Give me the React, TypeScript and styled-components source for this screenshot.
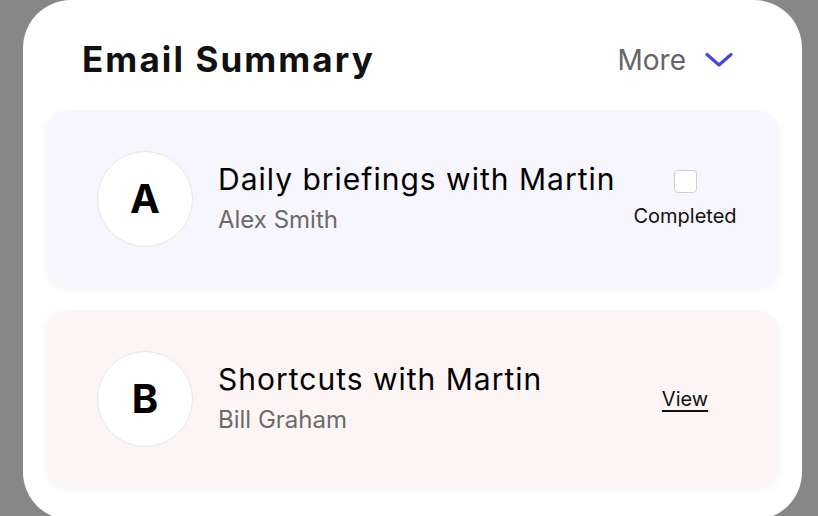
import styled, { createGlobalStyle } from "styled-components";

const GlobalStyle = createGlobalStyle`
  html, body {
    margin: 0;
    padding: 0;
    background: #878787;
    overflow: hidden;
  }
  * {
    box-sizing: border-box;
  }
`;

// white panel
const Panel = styled.div`
  margin-left: 23px;
  width: 779px;
  height: 520px;
  background: #ffffff;
  border-radius: 48px;
  padding: 0 24px;
  font-family: Inter, "Noto Sans", sans-serif;
`;

const Header = styled.div`
  height: 111px;
  display: flex;
  align-items: center;
  justify-content: space-between;
  padding: 6px 45px 0 35px;
`;

const Title = styled.h1`
  margin: 0;
  font-size: 35px;
  font-weight: 700;
  color: #111;
  letter-spacing: 2.1px;
`;

const MoreButton = styled.button`
  display: flex;
  align-items: center;
  gap: 19px;
  border: none;
  background: none;
  padding: 0;
  margin-top: 2px;
  font-family: Inter, sans-serif;
  font-size: 28px;
  color: #666;
  cursor: pointer;
`;

const List = styled.div`
  display: flex;
  flex-direction: column;
  gap: 25px;
`;

const Card = styled.div<{ $bg: string }>`
  height: 175px;
  display: flex;
  align-items: center;
  padding: 0 38px 0 50px;
  background: ${(p) => p.$bg};
  border-radius: 20px;
  box-shadow: 0 3px 10px rgba(0, 0, 0, 0.06);
`;

const Avatar = styled.div`
  width: 96px;
  height: 96px;
  flex-shrink: 0;
  border-radius: 50%;
  background: #fff;
  border: 1px solid #e6e6e6;
  display: flex;
  align-items: center;
  justify-content: center;
  font-size: 40px;
  font-weight: 700;
  color: #000;
`;

const Info = styled.div`
  flex: 1;
  margin-left: 25px;
  display: flex;
  flex-direction: column;
  gap: 8px;
  padding-bottom: 2px;
`;

const Subject = styled.div`
  font-size: 30px;
  letter-spacing: 1px;
  color: #000;
  line-height: 36px;
  white-space: nowrap;
`;

const Sender = styled.div`
  font-size: 24px;
  color: #6b6b6b;
  line-height: 30px;
`;

const Action = styled.div`
  width: 110px;
  display: flex;
  flex-direction: column;
  align-items: center;
  gap: 11px;
`;

const Check = styled.span`
  width: 23px;
  height: 23px;
  border: 1.5px solid #cfcfcf;
  border-radius: 4px;
  background: #fff;
`;

const Label = styled.span`
  font-size: 20px;
  color: #111;
`;

const ViewLink = styled.a`
  font-size: 20px;
  color: #111;
  text-decoration: underline;
  text-underline-offset: 4px;
  cursor: pointer;
`;

const emails = [
  { letter: "A", subject: "Daily briefings with Martin", sender: "Alex Smith", bg: "#f7f5fe", kind: "check" },
  { letter: "B", subject: "Shortcuts with Martin", sender: "Bill Graham", bg: "#fdf5f5", kind: "view" },
];

export default function App() {
  return (
    <>
      <GlobalStyle />
      <Panel>
        <Header>
          <Title>Email Summary</Title>
          <MoreButton>
            More
            <svg width="28" height="16" viewBox="0 0 28 16" fill="none">
              <path d="M2 2.5L14 13L26 2.5" stroke="#4b44e0" strokeWidth="3.2" strokeLinecap="round" strokeLinejoin="round" />
            </svg>
          </MoreButton>
        </Header>
        <List>
          {emails.map((e) => (
            <Card key={e.letter} $bg={e.bg}>
              <Avatar>{e.letter}</Avatar>
              <Info>
                <Subject>{e.subject}</Subject>
                <Sender>{e.sender}</Sender>
              </Info>
              <Action>
                {e.kind === "check" ? (
                  <>
                    <Check />
                    <Label>Completed</Label>
                  </>
                ) : (
                  <ViewLink>View</ViewLink>
                )}
              </Action>
            </Card>
          ))}
        </List>
      </Panel>
    </>
  );
}
